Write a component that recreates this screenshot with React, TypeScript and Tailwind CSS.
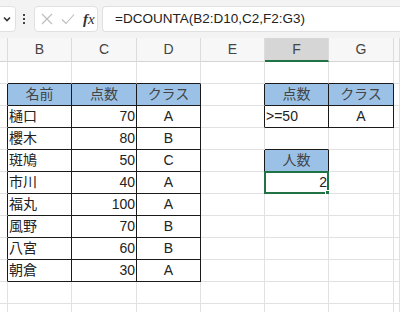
import React from 'react';

const colWidths = ['w-[8px]', 'w-[64px]', 'w-[65px]', 'w-[64px]', 'w-[64px]', 'w-[64px]', 'w-[65px]', 'w-[6px]'];
const letters = ['', 'B', 'C', 'D', 'E', 'F', 'G', ''];

type Cell = { t: string; align: 'l' | 'r' | 'c'; head?: boolean };

const names = ['樋口', '櫻木', '斑鳩', '市川', '福丸', '風野', '八宮', '朝倉'];
const scores = ['70', '80', '50', '40', '100', '70', '60', '30'];
const classes = ['A', 'B', 'C', 'A', 'A', 'B', 'B', 'A'];

const cells: Record<string, Cell> = {
  '2-1': { t: '名前', align: 'c', head: true },
  '2-2': { t: '点数', align: 'c', head: true },
  '2-3': { t: 'クラス', align: 'c', head: true },
  '2-5': { t: '点数', align: 'c', head: true },
  '2-6': { t: 'クラス', align: 'c', head: true },
  '3-5': { t: '>=50', align: 'l' },
  '3-6': { t: 'A', align: 'c' },
  '5-5': { t: '人数', align: 'c', head: true },
  '6-5': { t: '2', align: 'r' },
};
names.forEach((n, i) => {
  cells[`${i + 3}-1`] = { t: n, align: 'l' };
  cells[`${i + 3}-2`] = { t: scores[i], align: 'r' };
  cells[`${i + 3}-3`] = { t: classes[i], align: 'c' };
});

const inTable = (r: number, c: number) =>
  (c >= 1 && c <= 3 && r >= 2 && r <= 10) || (c >= 5 && c <= 6 && r >= 2 && r <= 3) || (c === 5 && r === 5);

const rows = [1, 2, 3, 4, 5, 6, 7, 8, 9, 10, 11, 12];

function GridCell({ r, c }: { r: number; c: number }) {
  const cell = cells[`${r}-${c}`];
  const right = inTable(r, c) || inTable(r, c + 1) ? 'border-r-[#1a1a1a]' : 'border-r-[#e1e1e1]';
  const bottom = inTable(r, c) || inTable(r + 1, c) ? 'border-b-[#1a1a1a]' : 'border-b-[#e1e1e1]';
  const bg = cell?.head ? 'bg-[#9bc2e6]' : 'bg-white';
  const align = cell?.align === 'r' ? 'justify-end pr-[1px]' : cell?.align === 'c' ? 'justify-center' : 'justify-start pl-[1px]';
  const selected = r === 6 && c === 5;
  return (
    <div className={`relative flex h-full shrink-0 items-center border-r border-b ${colWidths[c]} ${right} ${bottom} ${bg} ${align}`}>
      {cell && <span className={cell.head ? 'text-[#444]' : 'text-[#222]'}>{cell.t}</span>}
      {selected && (
        <div className="absolute -left-[1px] -top-[1px] h-[23px] w-[65px] border-2 border-[#217346]">
          <div className="absolute -bottom-[4px] -right-[4px] h-[6px] w-[6px] border border-white bg-[#217346]" />
        </div>
      )}
    </div>
  );
}

export default function App() {
  return (
    <div className="h-[312px] w-[400px] overflow-hidden bg-white text-[14px]" style={{ fontFamily: '"Liberation Sans", "Noto Sans CJK JP", sans-serif' }}>
      {/* formula bar */}
      <div className="flex h-[38px] items-center bg-[#f3f3f3]">
        <div className="ml-[-20px] flex h-[26px] w-[36px] items-center justify-end rounded-[4px] border border-[#e0e0e0] bg-white pr-[3px]">
          <svg className="h-[10px] w-[10px]" viewBox="0 0 10 10" fill="none" stroke="#333" strokeWidth="1.6">
            <path d="M2 3.5l3 3 3-3" />
          </svg>
        </div>
        <div className="ml-[7px] flex flex-col gap-[2px]">
          <span className="h-[2px] w-[2px] bg-[#444]" />
          <span className="h-[2px] w-[2px] bg-[#444]" />
          <span className="h-[2px] w-[2px] bg-[#444]" />
        </div>
        <div className="ml-[9px] flex h-[26px] w-[64px] items-center rounded-[4px] border border-[#e0e0e0] bg-white">
          <svg className="ml-[6px] h-[12px] w-[12px]" viewBox="0 0 12 12" stroke="#bbb" strokeWidth="1.1">
            <path d="M1 1l10 10M11 1L1 11" />
          </svg>
          <svg className="ml-[8px] h-[12px] w-[14px]" viewBox="0 0 14 12" fill="none" stroke="#bbb" strokeWidth="1.1">
            <path d="M1 6.5l4 4 8-9" />
          </svg>
          <span className="ml-[8px] font-serif text-[15px] italic text-[#333]" style={{ fontFamily: '"Liberation Serif", serif' }}>
            <span className="font-bold">f</span>x
          </span>
        </div>
        <div className="ml-[4px] flex h-[26px] flex-1 items-center rounded-l-[4px] border border-r-0 border-[#e0e0e0] bg-white pl-[12px] text-[13.5px] text-[#222]">
          =DCOUNTA(B2:D10,C2,F2:G3)
        </div>
      </div>

      {/* column headers */}
      <div className="flex h-[24px] bg-[#f7f7f7] text-[#444]">
        {letters.map((l, c) => (
          <div
            key={c}
            className={`flex shrink-0 items-center justify-center border-r border-r-[#dcdcdc] ${colWidths[c]} ${
              c === 5 ? 'border-b-2 border-b-[#217346] bg-[#d6d6d6]' : 'border-b border-b-[#d4d4d4]'
            }`}
          >
            {l}
          </div>
        ))}
      </div>

      {/* grid */}
      {rows.map((r) => (
        <div key={r} className="flex h-[22px]">
          {colWidths.map((_, c) => (
            <GridCell key={c} r={r} c={c} />
          ))}
        </div>
      ))}
    </div>
  );
}
